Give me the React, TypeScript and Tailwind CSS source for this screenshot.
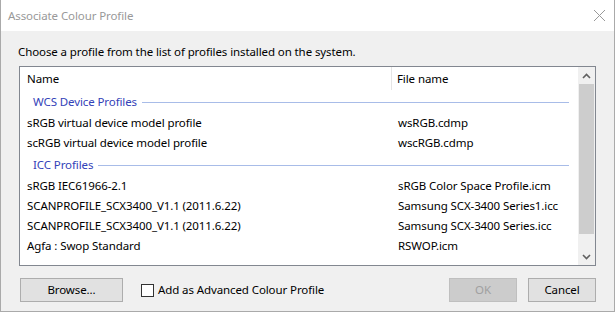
const FONT = { fontFamily: '"Noto Sans", "Liberation Sans", sans-serif' };

type Row = { kind: 'group'; label: string } | { kind: 'item'; name: string; file: string };

const ROWS: Row[] = [
  { kind: 'group', label: 'WCS Device Profiles' },
  { kind: 'item', name: 'sRGB virtual device model profile', file: 'wsRGB.cdmp' },
  { kind: 'item', name: 'scRGB virtual device model profile', file: 'wscRGB.cdmp' },
  { kind: 'group', label: 'ICC Profiles' },
  { kind: 'item', name: 'sRGB IEC61966-2.1', file: 'sRGB Color Space Profile.icm' },
  { kind: 'item', name: 'SCANPROFILE_SCX3400_V1.1 (2011.6.22)', file: 'Samsung SCX-3400 Series1.icc' },
  { kind: 'item', name: 'SCANPROFILE_SCX3400_V1.1 (2011.6.22)', file: 'Samsung SCX-3400 Series.icc' },
  { kind: 'item', name: 'Agfa : Swop Standard', file: 'RSWOP.icm' },
];

function Chevron({ down }: { down?: boolean }) {
  return (
    <svg width="9" height="6" viewBox="0 0 9 6" className={down ? 'rotate-180' : ''}>
      <path d="M1 5 L4.5 1.5 L8 5" fill="none" stroke="#606060" strokeWidth="1.6" />
    </svg>
  );
}

export default function App() {
  return (
    <div style={FONT} className="w-[615px] h-[313px] bg-white text-[11.5px] tracking-[-0.1px] text-black overflow-hidden">
      <div className="w-[615px] h-[312px] border-x border-b border-[#aaaaaa] flex flex-col">
        {/* title bar */}
        <div className="h-[31px] bg-white flex items-center justify-between pl-[7px] pr-[8px]">
          <span className="text-[#999999]">Associate Colour Profile</span>
          <svg width="13" height="13" viewBox="0 0 13 13">
            <path d="M1 1 L12 12 M12 1 L1 12" stroke="#999999" strokeWidth="1" />
          </svg>
        </div>

        {/* body */}
        <div className="flex-1 bg-[#f0f0f0] px-[18px] pt-[11px] flex flex-col">
          <div className="h-[24px] leading-[20px] -ml-[1px]">Choose a profile from the list of profiles installed on the system.</div>

          <div className="h-[200px] bg-white border border-[#828790] flex">
            <div className="flex-1 flex flex-col">
              <div className="h-[23px] flex items-center">
                <div className="w-[372px] pl-[7px] border-r border-[#e5e5e5] h-full flex items-center">Name</div>
                <div className="pl-[5px]">File name</div>
              </div>
              {ROWS.map((r, i) =>
                r.kind === 'group' ? (
                  <div key={i} className="h-[23px] flex items-center pl-[13px] pr-[9px]">
                    <span className="text-[#3342b8]">{r.label}</span>
                    <div className="flex-1 h-px bg-[#a8bce8] ml-[5px] mt-[1px]" />
                  </div>
                ) : (
                  <div key={i} className="h-[20px] flex items-center">
                    <div className="w-[373px] pl-[7px] whitespace-nowrap">{r.name}</div>
                    <div className="pl-[5px] whitespace-nowrap">{r.file}</div>
                  </div>
                ),
              )}
            </div>
            {/* scrollbar */}
            <div className="w-[17px] bg-[#f0f0f0] flex flex-col">
              <div className="h-[17px] flex items-center justify-center">
                <Chevron />
              </div>
              <div className="h-[150px] mx-[1px] bg-[#cdcdcd]" />
              <div className="flex-1" />
              <div className="h-[17px] flex items-center justify-center">
                <Chevron down />
              </div>
            </div>
          </div>

          {/* bottom buttons */}
          <div className="mt-[12px] flex items-center">
            <button className="w-[103px] h-[24px] ml-[1px] bg-[#e1e1e1] border border-[#adadad]">Browse...</button>
            <label className="ml-[18px] flex items-center">
              <span className="w-[13px] h-[13px] border border-[#333333] bg-white" />
              <span className="ml-[4px]">Add as Advanced Colour Profile</span>
            </label>
            <div className="flex-1" />
            <button className="w-[68px] h-[24px] bg-[#cccccc] border border-[#bfbfbf] text-[#a0a0a0]">OK</button>
            <button className="w-[68px] h-[24px] ml-[11px] bg-[#e1e1e1] border border-[#adadad]">Cancel</button>
          </div>
        </div>
      </div>
    </div>
  );
}
